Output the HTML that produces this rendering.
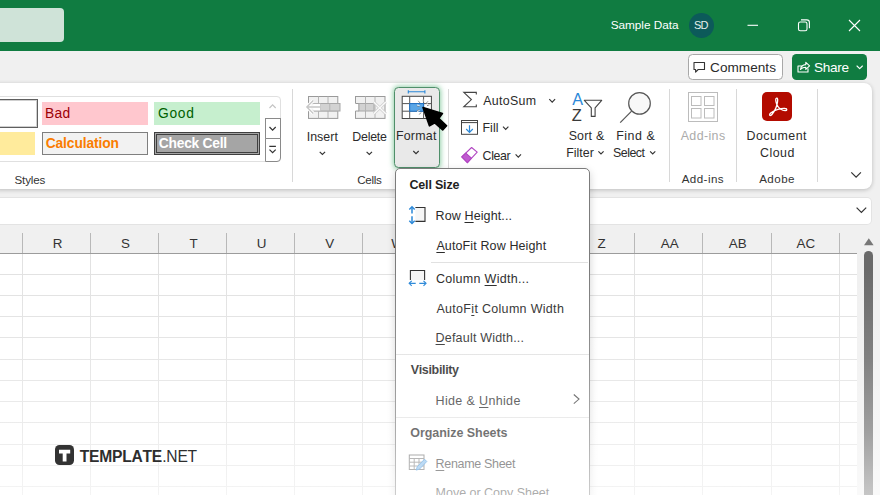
<!DOCTYPE html>
<html><head><meta charset="utf-8">
<style>
*{margin:0;padding:0;box-sizing:border-box}
html,body{width:880px;height:495px;overflow:hidden;background:#f0f0f0;font-family:"Liberation Sans",sans-serif;color:#2b2b2b;font-kerning:none}
.a{position:absolute}
.t{position:absolute;white-space:nowrap;line-height:1;color:#2b2b2b}
svg{position:absolute;overflow:visible;left:0;top:0}
#title{left:0;top:0;width:880px;height:51px;background:#107c41}
#search{left:-10px;top:8px;width:73.5px;height:34px;border-radius:4px;background:#cfe3d8}
#ribbon{left:-10px;top:83px;width:881.5px;height:105.5px;background:#fff;border-radius:8px;box-shadow:0 1px 4px rgba(0,0,0,.22)}
#fbar{left:-10px;top:198px;width:880.5px;height:26px;background:#fff;border-radius:4px;box-shadow:0 0 0 1px rgba(0,0,0,.05)}
#grid{left:0;top:253px;width:857px;height:242px;background:#fff}
.vl{position:absolute;top:253px;width:1px;height:242px;background:#e2e2e2}
.vh{position:absolute;top:233px;width:1px;height:20px;background:#b8b8b8}
.hl{position:absolute;left:0;width:857px;height:1px;background:#e2e2e2}
.sep{position:absolute;top:88.5px;width:1px;height:93.5px;background:#d8d8d8}
#menu{left:394.6px;top:168px;width:195px;height:340px;background:#fff;border:1px solid #7c7c7c;border-radius:5px;box-shadow:0 3px 8px rgba(0,0,0,.18)}
.msep{position:absolute;height:1px;background:#e1e1e1}
u{text-decoration:underline;text-underline-offset:1.5px;text-decoration-thickness:1px}
</style></head><body>
<div id="title" class="a"></div>
<div id="search" class="a"></div>
<div class="t" style="left:610.66px;top:20.01px;font-size:11.8px;letter-spacing:-0.028px;color:#fff">Sample Data</div>
<div class="a" style="left:688.8px;top:13.1px;width:24.8px;height:24.8px;border-radius:50%;background:#0c5a5a"></div>
<div class="t" style="left:694.10px;top:19.99px;font-size:11px;letter-spacing:-0.855px;color:#e4efea">SD</div>
<svg width="880" height="51" fill="none" stroke="#fff" stroke-width="1.1">
<path d="M747.5 25.3H758"/>
<rect x="798.5" y="22" width="8.5" height="8.8" rx="1.8"/><path d="M801 19.9h5.8a2.6 2.6 0 0 1 2.6 2.6v5.8"/>
<path d="M849 20l11 11M860 20l-11 11"/>
</svg>
<div class="a" style="left:688px;top:54px;width:95px;height:26px;background:#fff;border:1px solid #a8a8a8;border-radius:4.5px"></div>
<svg width="880" height="90" fill="none" stroke="#333" stroke-width="1.1" stroke-linejoin="round">
<path d="M694 62.5h10.5v7h-6.3l-2.6 2.6v-2.6h-1.6z"/>
</svg>
<div class="a" style="left:792px;top:54px;width:75.3px;height:26px;background:#107c41;border-radius:4.5px"></div>
<svg width="880" height="90" fill="none" stroke="#fff" stroke-width="1.1" stroke-linejoin="round" stroke-linecap="round">
<path d="M801.5 66h-3.5v6h10v-3.2"/><path d="M800.5 69.5c.4-3 2.4-4.8 5.3-4.9v-2.2l3.8 3.5-3.8 3.5v-2.2c-2.2 0-3.9.7-5.3 2.3z"/>
<path d="M857 66l2.7 2.7 2.7-2.7"/>
</svg>
<div class="t" style="left:710.11px;top:61.29px;font-size:13.6px;letter-spacing:0.019px">Comments</div>
<div class="t" style="left:813.98px;top:61.29px;font-size:13.6px;letter-spacing:-0.267px;color:#fff">Share</div>
<div id="ribbon" class="a"></div>
<div class="a" style="left:-10px;top:96px;width:290.5px;height:65.5px;border:1px solid #e0e0e0;border-radius:4px"></div>
<div class="a" style="left:-10px;top:99px;width:48px;height:29px;border:1px solid #5f5f5f;background:#fff"></div>
<div class="a" style="left:-10px;top:100px;width:47px;height:27px;border:1px solid #cfcfcf;background:#fff"></div>
<div class="a" style="left:-10px;top:132px;width:45px;height:23px;background:#ffeb9c"></div>
<div class="a" style="left:41.5px;top:102px;width:106.3px;height:23px;background:#ffc7ce"></div>
<div class="a" style="left:41.5px;top:132px;width:106.3px;height:23px;background:#f2f2f2;border:1px solid #7f7f7f"></div>
<div class="a" style="left:154.3px;top:102px;width:106.2px;height:23px;background:#c6efce"></div>
<div class="a" style="left:154.3px;top:132px;width:106.2px;height:23px;background:#a5a5a5;border:3px double #3f3f3f"></div>
<div class="a" style="left:265px;top:118px;width:15.5px;height:20.5px;border:1px solid #8a8a8a;background:#fff"></div>
<div class="a" style="left:265px;top:138px;width:15.5px;height:23.5px;border:1px solid #8a8a8a;border-radius:0 0 4px 0;background:#fff"></div>
<svg width="880" height="190" fill="none" stroke-width="1.2">
<path d="M269.5 108l3.1-3.1 3.1 3.1" stroke="#c4c4c4"/>
<path d="M269.5 127l3.1 3.1 3.1-3.1" stroke="#333"/>
<path d="M269.3 146.3h6.6M269.5 149.6l3.1 3.1 3.1-3.1" stroke="#333"/>
</svg>
<div class="t" style="left:45.07px;top:107.02px;font-size:13.8px;letter-spacing:0.334px;color:#9c0006">Bad</div>
<div class="t" style="left:45.63px;top:137.02px;font-size:13.8px;letter-spacing:-0.096px;font-weight:bold;color:#fa7d00">Calculation</div>
<div class="t" style="left:158.11px;top:106.82px;font-size:13.8px;letter-spacing:0.675px;color:#006100">Good</div>
<div class="t" style="left:158.83px;top:136.92px;font-size:13.8px;letter-spacing:-0.247px;font-weight:bold;color:#fff">Check Cell</div>
<div class="t" style="left:14.47px;top:173.58px;font-size:11.6px;letter-spacing:-0.129px;color:#333">Styles</div>
<div class="sep" style="left:291.5px"></div>
<div class="sep" style="left:448.0px"></div>
<div class="sep" style="left:668.5px"></div>
<div class="sep" style="left:735.5px"></div>
<div class="sep" style="left:817.0px"></div>
<div class="a" style="left:394.3px;top:87px;width:45.6px;height:80.6px;background:#e9e9e9;border:1px solid #4f8f6a;border-radius:4.5px;box-shadow:0 0 5px 1px rgba(60,170,100,.55)"></div>
<svg width="880" height="190">
<g stroke="#9a9a9a" stroke-width="1" fill="#f1f1f1">
<rect x="308.5" y="96.5" width="29.3" height="21.9"/>
<path d="M318.5 96.5v21.9M328 96.5v21.9M308.5 103.5h29.3M308.5 111h29.3" fill="none" stroke="#b4b4b4"/>
<rect x="320" y="103.5" width="20" height="7.5" fill="#d2d2d2" stroke="#a8a8a8"/>
<path d="M329.8 103.5v7.5" stroke="#b4b4b4"/>
</g>
<rect x="313.400" y="103.500" width="6.800" height="7.500" fill="#fff" stroke="none"/><path d="M313.400 103.500h6.600M313.400 111h6.600" stroke="#b4b4b4" fill="none"/>
<path d="M320 107H307M313.300 100.500L306.800 107L313.300 113.500" fill="none" stroke="#fff" stroke-width="3.200"/>
<path d="M320 107H307M313.300 100.500L306.800 107L313.300 113.500" fill="none" stroke="#c6c6c6" stroke-width="1.300"/>
<g stroke="#9a9a9a" stroke-width="1" fill="#f1f1f1">
<rect x="355.5" y="96.5" width="29.5" height="21.9"/>
<path d="M365.5 96.5v21.9M375 96.5v21.9" fill="none" stroke="#b4b4b4"/>
<rect x="353" y="103.5" width="6" height="7.5" fill="#fff" stroke="none"/>
<path d="M355.5 103.5h3.5v7.5h-3.5" fill="#fff" stroke="#9a9a9a"/>
<rect x="359" y="103.5" width="15" height="7.5" fill="#d2d2d2" stroke="#a8a8a8"/>
<path d="M365.5 103.5v7.5" stroke="#b4b4b4"/>
</g>
<path d="M373.800 102l12 11.800M385.800 102l-12 11.800" stroke="#cdcdcd" stroke-width="2.800" fill="none"/>
<path d="M373.800 102l12 11.800M385.800 102l-12 11.800" stroke="#fafafa" stroke-width="1.300" fill="none"/>
</svg>
<svg width="880" height="190">
<path d="M408.3 91.8h16.6M408.3 90.2v3.2M424.9 90.2v3.2" stroke="#2b88d8" stroke-width="1.1" fill="none"/>
<rect x="402.2" y="96.3" width="29.2" height="22.2" fill="#fff" stroke="#444" stroke-width="1"/>
<path d="M409.7 96.3v22.2M423.6 96.3v22.2M402.2 103.6h29.2M402.2 111.2h29.2" stroke="#555" stroke-width="1" fill="none"/>
<rect x="409.7" y="103.6" width="13.9" height="7.6" fill="#5aa6e6" stroke="#1e72c8" stroke-width="1"/>
</svg>
<div class="t" style="left:306.66px;top:131.30px;font-size:12.4px;letter-spacing:0.045px">Insert</div>
<div class="t" style="left:352.28px;top:131.30px;font-size:12.4px;letter-spacing:-0.235px">Delete</div>
<div class="t" style="left:395.88px;top:130.00px;font-size:12.4px;letter-spacing:0.267px">Format</div>
<div class="t" style="left:357.21px;top:173.58px;font-size:11.6px;letter-spacing:-0.269px;color:#333">Cells</div>
<svg width="880" height="190" fill="none" stroke="#333" stroke-width="1.15">
<path d="M319.7 151.8l2.7 2.7 2.7-2.7"/><path d="M366.6 151.8l2.7 2.7 2.7-2.7"/><path d="M413.3 151l2.7 2.7 2.7-2.7"/>
<path d="M549.3 99.2l2.9 2.9 2.9-2.9"/><path d="M503 126.7l2.7 2.7 2.7-2.7"/><path d="M515.6 154.4l2.7 2.7 2.7-2.7"/>
<path d="M598.4 151.4l2.6 2.6 2.6-2.6"/><path d="M650.1 151.4l2.6 2.6 2.6-2.6"/>
<path d="M851.3 172.3l4.8 4.8 4.8-4.8" stroke-width="1.2"/>
</svg>
<svg width="880" height="190" fill="none">
<path d="M476.3 94.6v-2.2h-12.5l7.6 7.2-7.6 7.2h12.5v-2.2" stroke="#444" stroke-width="1.1"/>
<rect x="461.5" y="120.5" width="16" height="13.8" stroke="#444" stroke-width="1" fill="#fff"/>
<path d="M461.5 122.6h16" stroke="#444" stroke-width="1"/>
<path d="M469.5 125.3v6.8M466.2 129l3.3 3.3 3.3-3.3" stroke="#2b88d8" stroke-width="1.2"/>
<path d="M461.8 156.9l9.8-9.4 5.6 4.6-9.8 10.6z" fill="#fff" stroke="#b146c2" stroke-width="1.1" stroke-linejoin="round"/>
<path d="M461.8 156.9l4-3.8 5.6 5-4 4.6z" fill="#c05ad0" stroke="#b146c2" stroke-width="1.1" stroke-linejoin="round"/>
<path d="M584.3 100.3h17.4l-6.6 7.6v8.5h-3.8v-8.5z" stroke="#444" stroke-width="1.1" stroke-linejoin="round" fill="#fff"/>
<circle cx="639.5" cy="103.4" r="10.8" fill="#f8f8f8" stroke="#555" stroke-width="1.2"/>
<path d="M631.6 111.2L620.2 122.7" stroke="#555" stroke-width="1.2"/>
<rect x="688.5" y="92.5" width="29" height="29" stroke="#bcbcbc" fill="#fff"/>
<rect x="691.5" y="96.5" width="9.500" height="9" stroke="#bcbcbc"/><rect x="704.5" y="96.5" width="9.500" height="9" stroke="#bcbcbc"/>
<rect x="691.5" y="108.500" width="9.500" height="9.500" stroke="#bcbcbc"/><rect x="704.5" y="108.500" width="9.500" height="9.500" stroke="#bcbcbc"/>
</svg>
<div class="t" style="left:572.17px;top:91.39px;font-size:16.2px;color:#2b88d8">A</div>
<div class="t" style="left:571.68px;top:106.72px;font-size:16.4px;color:#3a3a3a">Z</div>
<div class="t" style="left:483.18px;top:95.10px;font-size:12.4px;letter-spacing:0.339px">AutoSum</div>
<div class="t" style="left:482.38px;top:122.40px;font-size:12.4px;letter-spacing:0.103px">Fill</div>
<div class="t" style="left:482.57px;top:150.10px;font-size:12.4px;letter-spacing:-0.374px">Clear</div>
<div class="t" style="left:568.64px;top:130.40px;font-size:12.4px;letter-spacing:0.220px">Sort &amp;</div>
<div class="t" style="left:566.18px;top:147.20px;font-size:12.4px;letter-spacing:0.034px">Filter</div>
<div class="t" style="left:616.28px;top:130.40px;font-size:12.4px;letter-spacing:0.515px">Find &amp;</div>
<div class="t" style="left:613.04px;top:147.20px;font-size:12.4px;letter-spacing:-0.502px">Select</div>
<div class="t" style="left:680.68px;top:130.40px;font-size:12.4px;letter-spacing:0.405px;color:#ababab">Add-ins</div>
<div class="t" style="left:681.68px;top:173.48px;font-size:11.6px;letter-spacing:0.435px;color:#333">Add-ins</div>
<div class="t" style="left:746.48px;top:130.40px;font-size:12.4px;letter-spacing:0.513px">Document</div>
<div class="t" style="left:759.97px;top:147.20px;font-size:12.4px;letter-spacing:0.483px">Cloud</div>
<div class="t" style="left:759.18px;top:173.48px;font-size:11.6px;letter-spacing:0.449px;color:#333">Adobe</div>
<div class="a" style="left:762px;top:92px;width:29.8px;height:29.2px;border-radius:5px;background:#b30b00"></div>
<svg width="880" height="190" fill="none" stroke="#fff" stroke-width="1.3" stroke-linejoin="round" stroke-linecap="round">
<path d="M776.6 98.2c-1.2.2-1.2 2.6.2 6.200c1.600 3.900 5.400 6.300 8.300 6.300c2.300 0 2.300-2 0-2.200c-3.600-.4-10.800 1.400-14.400 4.600c-2.200 2-.6 3.600 1.200 1.400c2.800-3.400 5-8.200 5.600-12.400c.4-2.800.2-4.100-.9-3.900z"/>
</svg>
<div id="fbar" class="a"></div>
<div id="grid" class="a"></div>
<svg width="880" height="495" fill="none" stroke="#333" stroke-width="1.2"><path d="M856.600 207.600l4.800 4.800 4.800-4.800"/></svg>
<div class="vh" style="left:22px"></div><div class="vl" style="left:22px"></div><div class="vh" style="left:90px"></div><div class="vl" style="left:90px"></div><div class="vh" style="left:158px"></div><div class="vl" style="left:158px"></div><div class="vh" style="left:226px"></div><div class="vl" style="left:226px"></div><div class="vh" style="left:294px"></div><div class="vl" style="left:294px"></div><div class="vh" style="left:362px"></div><div class="vl" style="left:362px"></div><div class="vh" style="left:430px"></div><div class="vl" style="left:430px"></div><div class="vh" style="left:498px"></div><div class="vl" style="left:498px"></div><div class="vh" style="left:566px"></div><div class="vl" style="left:566px"></div><div class="vh" style="left:634px"></div><div class="vl" style="left:634px"></div><div class="vh" style="left:702px"></div><div class="vl" style="left:702px"></div><div class="vh" style="left:771px"></div><div class="vl" style="left:771px"></div><div class="vh" style="left:839px"></div><div class="vl" style="left:839px"></div>
<div class="t" style="left:23.5px;top:236.96px;width:68px;text-align:center;font-size:13.4px;color:#333">R</div><div class="t" style="left:91.5px;top:236.96px;width:68px;text-align:center;font-size:13.4px;color:#333">S</div><div class="t" style="left:159.6px;top:236.96px;width:68px;text-align:center;font-size:13.4px;color:#333">T</div><div class="t" style="left:227.6px;top:236.96px;width:68px;text-align:center;font-size:13.4px;color:#333">U</div><div class="t" style="left:295.6px;top:236.96px;width:68px;text-align:center;font-size:13.4px;color:#333">V</div><div class="t" style="left:363.6px;top:236.96px;width:68px;text-align:center;font-size:13.4px;color:#333">W</div><div class="t" style="left:431.7px;top:236.96px;width:68px;text-align:center;font-size:13.4px;color:#333">X</div><div class="t" style="left:499.7px;top:236.96px;width:68px;text-align:center;font-size:13.4px;color:#333">Y</div><div class="t" style="left:567.7px;top:236.96px;width:68px;text-align:center;font-size:13.4px;color:#333">Z</div><div class="t" style="left:635.8px;top:236.96px;width:68px;text-align:center;font-size:13.4px;color:#333">AA</div><div class="t" style="left:703.8px;top:236.96px;width:68px;text-align:center;font-size:13.4px;color:#333">AB</div><div class="t" style="left:771.8px;top:236.96px;width:68px;text-align:center;font-size:13.4px;color:#333">AC</div>
<div class="a" style="left:0;top:252.5px;width:857px;height:1px;background:#9c9c9c"></div>
<div class="hl" style="top:273.57px"></div><div class="hl" style="top:294.84px"></div><div class="hl" style="top:316.11px"></div><div class="hl" style="top:337.38px"></div><div class="hl" style="top:358.65px"></div><div class="hl" style="top:379.92px"></div><div class="hl" style="top:401.19px"></div><div class="hl" style="top:422.46px"></div><div class="hl" style="top:443.73px"></div><div class="hl" style="top:465.00px"></div><div class="hl" style="top:486.27px"></div>
<svg width="880" height="495"><path d="M864 245.3l4.8-7 4.8 7z" fill="#777"/></svg>
<div class="a" style="left:864.3px;top:251px;width:9.2px;height:260px;border-radius:4.6px;background:#6a6a6a"></div>
<div id="menu" class="a"></div>
<div class="t" style="left:409.49px;top:179.12px;font-size:12.5px;letter-spacing:-0.184px;font-weight:bold;color:#1f1f1f">Cell Size</div>
<div class="t" style="left:435.57px;top:210.32px;font-size:12.5px;letter-spacing:0.111px">Row <u>H</u>eight...</div>
<div class="t" style="left:436.38px;top:240.32px;font-size:12.5px;letter-spacing:0.120px"><u>A</u>utoFit Row Height</div>
<div class="msep" style="left:430.5px;top:262px;width:157px"></div>
<div class="t" style="left:435.97px;top:272.92px;font-size:12.5px;letter-spacing:0.297px">Column <u>W</u>idth...</div>
<div class="t" style="left:436.38px;top:302.92px;font-size:12.5px;letter-spacing:0.309px">AutoF<u>i</u>t Column Width</div>
<div class="t" style="left:435.57px;top:332.32px;font-size:12.5px;letter-spacing:0.195px"><u>D</u>efault Width...</div>
<div class="msep" style="left:396px;top:354px;width:192.5px"></div>
<div class="t" style="left:410.71px;top:363.62px;font-size:12.5px;letter-spacing:-0.339px;font-weight:bold;color:#1f1f1f">Visibility</div>
<div class="t" style="left:435.57px;top:394.62px;font-size:12.5px;letter-spacing:0.348px">Hide &amp; <u>U</u>nhide</div>
<div class="msep" style="left:396px;top:416.5px;width:192.5px"></div>
<div class="t" style="left:410.29px;top:427.02px;font-size:12.5px;letter-spacing:-0.052px;font-weight:bold;color:#1f1f1f">Organize Sheets</div>
<div class="t" style="left:435.57px;top:457.82px;font-size:12.5px;letter-spacing:-0.324px"><u>R</u>ename Sheet</div>
<div class="t" style="left:435.57px;top:486.82px;font-size:12.5px;letter-spacing:-0.014px"><u>M</u>ove or Copy Sheet</div>
<svg width="880" height="495" fill="none">
<path d="M415.400 207.500h9.600v13.900h-9.600" stroke="#333" stroke-width="1.1" fill="#f6f6f6"/>
<path d="M412 207v6.600M412 216.200v7" stroke="#2b88d8" stroke-width="1.500"/>
<path d="M409.300 209.500l2.700-2.700 2.700 2.700M409.300 220.800l2.700 2.700 2.700-2.700" stroke="#2b88d8" stroke-width="1.400"/>
<path d="M410.4 280v-9.500h14.200v9.500" stroke="#333" stroke-width="1.1" fill="#f6f6f6"/>
<path d="M409.300 283.300h6.400M419.300 283.300h6.400" stroke="#2b88d8" stroke-width="1.3"/>
<path d="M411.700 280.800l-2.500 2.500 2.500 2.500M423.500 280.800l2.500 2.500-2.500 2.500" stroke="#2b88d8" stroke-width="1.2"/>
<path d="M573.800 394.500l5.200 4.600-5.200 4.600" stroke="#444" stroke-width="1.1"/>
<rect x="409.300" y="455" width="14.700" height="14.500" stroke="#666" stroke-width="1" fill="#fff"/>
<path d="M409.300 458.500h14.700M409.300 462.200h14.700M409.300 466h14.700M414.200 458.500v11M419 458.500v11" stroke="#777" stroke-width="1"/>
<path d="M424.500 459.200l2.300 2.300-7.300 7.600-3.300 1 1-3.300z" fill="#7db7ea" stroke="#2b88d8" stroke-width=".9" stroke-linejoin="round"/>
</svg>
<svg width="880" height="495">
<g stroke="#777" stroke-width=".9" fill="none"><path d="M418.300 100.800l1.800 2.200M423.200 99.500l.3 2.700M428 101.300l-1.700 2M416.800 105.800l2.600.6M416.800 110.800l2.600-.900M419.300 114.500l1.700-2M429.500 105l-2.500.700"/></g>
<g stroke="#fff" stroke-width=".9" fill="none"><path d="M419 100.300l1.800 2.200M424 99.500l.3 2.700M428.700 101.800l-1.700 2M417 105l2.600.6M417 111.500l2.600-.900M430 105.800l-2.500.700"/></g>
<path d="M423 107.400L442.400 113.400L438.700 118.400L446.600 125.800L442.700 130L434.800 122.800L429.500 125.900Z" fill="#000" stroke="#000" stroke-width="1.600" stroke-linejoin="round"/>
</svg>
<div class="a" style="left:0;top:250px;width:880px;height:245px;background:linear-gradient(to bottom,rgba(255,255,255,0) 8%,rgba(255,255,255,.16) 45%,rgba(255,255,255,.36) 74%,rgba(255,255,255,.62) 100%);pointer-events:none"></div>
<div class="a" style="left:54.700px;top:445.300px;width:19.700px;height:19.900px;border-radius:4.500px;background:#333"></div>
<svg width="880" height="495"><path d="M59 449.800h11.200v3.600h-3.700v8h-3.800v-8H59z" fill="#fff"/></svg>
<div class="t" style="left:79.82px;top:448.69px;font-size:15.6px;letter-spacing:-0.226px;font-weight:bold;color:#2e2e2e">TEMPLATE</div>
<div class="t" style="left:162.18px;top:448.69px;font-size:15.6px;letter-spacing:-0.184px;color:#2e2e2e">.NET</div>
</body></html>
